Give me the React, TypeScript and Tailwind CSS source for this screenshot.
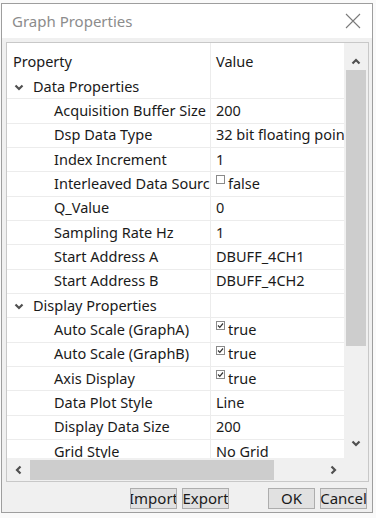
import React from "react";

type Row =
  | { kind: "cat"; label: string }
  | { kind: "prop"; label: string; value: string; check?: boolean };

const rows: Row[] = [
  { kind: "cat", label: "Data Properties" },
  { kind: "prop", label: "Acquisition Buffer Size", value: "200" },
  { kind: "prop", label: "Dsp Data Type", value: "32 bit floating point" },
  { kind: "prop", label: "Index Increment", value: "1" },
  { kind: "prop", label: "Interleaved Data Source", value: "false", check: false },
  { kind: "prop", label: "Q_Value", value: "0" },
  { kind: "prop", label: "Sampling Rate Hz", value: "1" },
  { kind: "prop", label: "Start Address A", value: "DBUFF_4CH1" },
  { kind: "prop", label: "Start Address B", value: "DBUFF_4CH2" },
  { kind: "cat", label: "Display Properties" },
  { kind: "prop", label: "Auto Scale (GraphA)", value: "true", check: true },
  { kind: "prop", label: "Auto Scale (GraphB)", value: "true", check: true },
  { kind: "prop", label: "Axis Display", value: "true", check: true },
  { kind: "prop", label: "Data Plot Style", value: "Line" },
  { kind: "prop", label: "Display Data Size", value: "200" },
  { kind: "prop", label: "Grid Style", value: "No Grid" },
  { kind: "prop", label: "Grid Color", value: "Gray" },
];

function CheckBox({ checked }: { checked: boolean }) {
  return (
    <svg width="9" height="9" viewBox="0 0 9 9" className="mb-[8px] mr-[3px] shrink-0">
      <rect x="0.5" y="0.5" width="8" height="8" fill="white" stroke="#8a8a8a" />
      {checked && <path d="M2 4.5 L3.8 6.3 L7 2.5" fill="none" stroke="#333" strokeWidth="1.2" />}
    </svg>
  );
}

function Chevron({ dir }: { dir: "up" | "down" | "left" | "right" }) {
  const d = {
    down: "M1.5 3.5 L5 7 L8.5 3.5",
    up: "M1.5 6.5 L5 3 L8.5 6.5",
    left: "M6.5 1.5 L3 5 L6.5 8.5",
    right: "M3.5 1.5 L7 5 L3.5 8.5",
  }[dir];
  return (
    <svg width="10" height="10" viewBox="0 0 10 10">
      <path d={d} fill="none" stroke="#505050" strokeWidth="2.2" />
    </svg>
  );
}

function Button({ label }: { label: string }) {
  return (
    <div className="flex h-[21px] w-[47px] items-center justify-center overflow-hidden border border-[#adadad] bg-[#e1e1e1] text-[15px] text-[#1a1a1a]">
      <span className="whitespace-nowrap">{label}</span>
    </div>
  );
}

export default function App() {
  return (
    <div
      className="h-[518px] w-[376px] overflow-hidden bg-[#fafafa] pl-[1px] pt-[3px]"
      style={{ fontFamily: '"Noto Sans", "Open Sans", sans-serif' }}
    >
      <div className="flex h-[510px] w-[372px] flex-col border border-[#9e9e9e] bg-[#f0f0f0]">
        {/* title bar */}
        <div className="flex h-[34px] shrink-0 items-center justify-between bg-white pl-[10px] pr-[11px]">
          <span className="text-[15px] text-[#8c8c8c]">Graph Properties</span>
          <svg width="16" height="16" viewBox="0 0 16 16">
            <path d="M1 1 L15 15 M15 1 L1 15" stroke="#7a7a7a" strokeWidth="1.1" />
          </svg>
        </div>

        {/* property grid */}
        <div className="ml-[4px] mt-[4px] flex h-[440px] w-[363px] flex-col border border-[#c8c8c8] bg-white">
          <div className="flex min-h-0 flex-1">
            <div className="relative w-[337px] overflow-hidden text-[14.5px] text-[#1a1a1a]">
              <div className="absolute bottom-0 left-[203px] top-0 w-px bg-[#ececec]" />
              <div className="flex h-[32px] items-center pt-[6px]">
                <div className="w-[203px] pl-[6px]">Property</div>
                <div className="pl-[6px]">Value</div>
              </div>
              {rows.map((r, i) =>
                r.kind === "cat" ? (
                  <div key={i} className="flex h-[24.33px] items-center border-b border-[#ececec]">
                    <div className="flex w-[203px] items-center pl-[7px]">
                      <Chevron dir="down" />
                      <span className="ml-[9px]">{r.label}</span>
                    </div>
                  </div>
                ) : (
                  <div key={i} className="flex h-[24.33px] items-center border-b border-[#ececec]">
                    <div className="w-[203px] shrink-0 overflow-hidden whitespace-nowrap pl-[47px]">{r.label}</div>
                    <div className="flex items-center whitespace-nowrap pl-[6px]">
                      {r.check !== undefined && <CheckBox checked={r.check} />}
                      <span>{r.value}</span>
                    </div>
                  </div>
                )
              )}
            </div>
            {/* vertical scrollbar */}
            <div className="flex w-[24px] flex-col bg-[#f0f0f0]">
              <div className="flex h-[26px] items-center justify-center pt-[12px]">
                <Chevron dir="up" />
              </div>
              <div className="mx-[2px] mt-[1px] h-[276px] bg-[#cdcdcd]" />
              <div className="flex-1" />
              <div className="flex h-[20px] items-center justify-center pb-[10px]">
                <Chevron dir="down" />
              </div>
            </div>
          </div>
          {/* horizontal scrollbar */}
          <div className="flex h-[23px] shrink-0 items-center bg-[#f0f0f0]">
            <div className="flex w-[23px] items-center justify-center">
              <Chevron dir="left" />
            </div>
            <div className="h-[20px] w-[244px] bg-[#cdcdcd]" />
            <div className="flex-1" />
            <div className="flex w-[22px] items-center justify-center">
              <Chevron dir="right" />
            </div>
            <div className="w-[24px]" />
          </div>
        </div>

        {/* buttons */}
        <div className="mt-[6px] flex pl-[128px]">
          <Button label="Import" />
          <div className="w-[5px]" />
          <Button label="Export" />
          <div className="w-[39px]" />
          <Button label="OK" />
          <div className="w-[5px]" />
          <Button label="Cancel" />
        </div>
      </div>
    </div>
  );
}
